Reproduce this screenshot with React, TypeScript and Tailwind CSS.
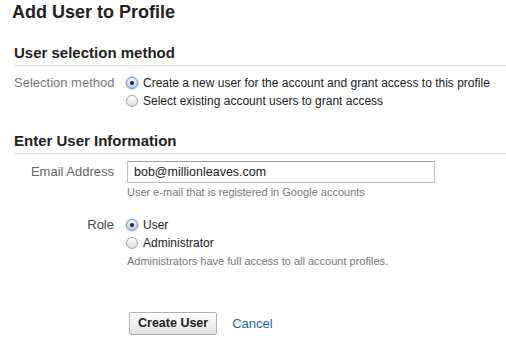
import React from 'react';

const Radio = ({ checked }: { checked?: boolean }) => (
	<span
		className={`flex w-[12px] h-[12px] shrink-0 items-center justify-center rounded-full border bg-linear-to-b ${
			checked
				? 'border-[#7a95bd] from-[#f1f6fd] to-[#b7cbe6] shadow-[0_0_1px_1px_rgba(120,160,220,0.35)]'
				: 'border-[#a3a3a3] from-white to-[#dcdcdc]'
		}`}
	>
		{checked && <span className="w-[4px] h-[4px] rounded-full bg-[#1d2430]" />}
	</span>
);

const Option = ({ label, checked }: { label: string; checked?: boolean }) => (
	<label className="flex h-[18px] items-center gap-[5px] whitespace-nowrap text-[12px]">
		<Radio checked={checked} />
		<span>{label}</span>
	</label>
);

export default function App() {
	return (
		<div className="w-[506px] h-[346px] overflow-hidden bg-white pl-[12px] font-['Liberation_Sans',Arial,sans-serif] text-[#222]">
			<h1 className="text-[18px] leading-[24px] font-bold">Add User to Profile</h1>

			{/* Section: selection method */}
			<div className="ml-[2px] mt-[19px]">
				<h2 className="text-[15px] leading-[20px] font-bold pb-[2px] border-b border-[#dddddd]">
					User selection method
				</h2>
				<div className="mt-[8px] flex gap-[12px] text-[13px] leading-[18px]">
					<div className="w-[100px] shrink-0 text-right text-[#777] whitespace-nowrap">Selection method</div>
					<div className="flex flex-col">
						<Option checked label="Create a new user for the account and grant access to this profile" />
						<Option label="Select existing account users to grant access" />
					</div>
				</div>
			</div>

			{/* Section: user information */}
			<div className="ml-[2px] mt-[21px]">
				<h2 className="text-[15px] leading-[20px] font-bold pb-[2px] border-b border-[#dddddd]">
					Enter User Information
				</h2>

				<div className="mt-[7px] flex gap-[12px] text-[13px] leading-[18px]">
					<div className="w-[100px] h-[22px] shrink-0 flex items-center justify-end text-[#666] whitespace-nowrap">
						Email Address
					</div>
					<div className="flex flex-col">
						<input
							type="text"
							defaultValue="bob@millionleaves.com"
							className="ml-[1px] w-[308px] h-[22px] border border-[#bdbdbd] border-t-[#a0a0a0] pl-[6px] text-[12.5px] text-[#222] outline-none font-['Liberation_Sans',Arial,sans-serif]"
						/>
						<p className="ml-[1px] mt-[2px] text-[11px] leading-[14px] text-[#777]">
							User e-mail that is registered in Google accounts
						</p>
					</div>
				</div>

				<div className="mt-[17px] flex gap-[12px] text-[13px] leading-[18px]">
					<div className="w-[100px] shrink-0 text-right text-[#444]">Role</div>
					<div className="flex flex-col">
						<Option checked label="User" />
						<Option label="Administrator" />
						<p className="ml-[1px] mt-[2px] text-[11px] leading-[14px] text-[#777]">
							Administrators have full access to all account profiles.
						</p>
					</div>
				</div>

				<div className="mt-[44px] flex items-center gap-[12px]">
					<div className="w-[100px] shrink-0" />
					<div className="flex items-center">
						<button className="ml-[3px] h-[23px] px-[8px] rounded-[2px] border border-[#b0b0b0] bg-linear-to-b from-white to-[#e2e2e2] text-[12.5px] font-bold text-[#222]">
							Create User
						</button>
						<a href="#" className="ml-[15px] text-[13px] text-[#2369a8]">
							Cancel
						</a>
					</div>
				</div>
			</div>
		</div>
	);
}
